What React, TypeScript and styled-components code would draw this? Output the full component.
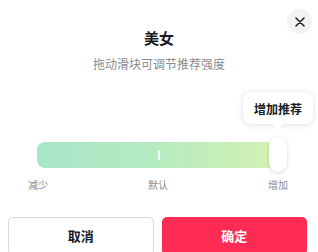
import React from "react";
import styled, { createGlobalStyle } from "styled-components";

const GlobalStyle = createGlobalStyle`
  html, body {
    margin: 0;
    padding: 0;
    background: #ffffff;
  }
  * {
    box-sizing: border-box;
  }
`;

const Sheet = styled.div`
  position: relative;
  width: 318px;
  height: 252px;
  overflow: hidden;
  background: #ffffff;
  font-family: "Noto Sans CJK SC", "Noto Sans", sans-serif;
  padding-top: 28px;
`;

const CloseButton = styled.button`
  position: absolute;
  top: 9px;
  right: 6px;
  width: 25px;
  height: 25px;
  border: none;
  border-radius: 50%;
  background: #f2f2f2;
  display: flex;
  align-items: center;
  justify-content: center;
  padding: 0;
  cursor: pointer;
`;

const Title = styled.div`
  text-align: center;
  font-size: 15px;
  line-height: 20px;
  font-weight: 700;
  color: #161823;
`;

const Subtitle = styled.div`
  margin-top: 8px;
  text-align: center;
  font-size: 12px;
  line-height: 16px;
  color: #8a8b91;
`;

const Track = styled.div`
  position: relative;
  margin: 70px 37px 0;
  height: 26px;
  border-radius: 8px;
  background: linear-gradient(90deg, #a8e6c9 0%, #b6ebc0 50%, #d6f2b0 100%);
`;

const DefaultMark = styled.div`
  position: absolute;
  left: 50%;
  top: 8px;
  width: 2px;
  height: 10px;
  margin-left: -1px;
  border-radius: 1px;
  background: rgba(255, 255, 255, 0.95);
`;

const Thumb = styled.div<{ $left: number }>`
  position: absolute;
  left: ${({ $left }) => $left}px;
  top: -5px;
  width: 18px;
  height: 35px;
  border-radius: 9px;
  background: #ffffff;
  box-shadow: 0 1px 4px rgba(0, 0, 0, 0.16);
`;

const Tooltip = styled.div<{ $left: number }>`
  position: absolute;
  left: ${({ $left }) => $left}px;
  top: -50px;
  width: 70px;
  height: 32px;
  border-radius: 8px;
  background: #ffffff;
  box-shadow: 0 1px 6px rgba(0, 0, 0, 0.13);
  display: flex;
  align-items: center;
  justify-content: center;
  font-size: 12px;
  font-weight: 700;
  color: #161823;

  &::after {
    content: "";
    position: absolute;
    left: 50%;
    bottom: -5px;
    margin-left: -5px;
    border-left: 5px solid transparent;
    border-right: 5px solid transparent;
    border-top: 5px solid #ffffff;
  }
`;

const Labels = styled.div`
  margin: 10px 30px 0 28px;
  display: flex;
  justify-content: space-between;
  font-size: 10px;
  line-height: 14px;
  color: #8a8b91;
`;

const Actions = styled.div`
  margin-top: 25px;
  padding: 0 11px 0 8px;
  display: grid;
  grid-template-columns: 1fr 1fr;
  gap: 8px;
`;

const ActionButton = styled.button<{ $primary?: boolean }>`
  height: 38px;
  border-radius: 5px;
  font-family: inherit;
  font-size: 13px;
  font-weight: 700;
  padding: 0 0 2px;
  border: ${({ $primary }) => ($primary ? "none" : "1px solid #d9d9db")};
  background: ${({ $primary }) => ($primary ? "#fe2c55" : "#ffffff")};
  color: ${({ $primary }) => ($primary ? "#ffffff" : "#161823")};
  cursor: pointer;
`;

const App = () => {
  return (
    <>
      <GlobalStyle />
      <Sheet>
        <CloseButton aria-label="关闭">
          <svg width="10" height="10" viewBox="0 0 10 10">
            <path
              d="M1 1 L9 9 M9 1 L1 9"
              stroke="#222"
              strokeWidth="1.6"
              strokeLinecap="round"
            />
          </svg>
        </CloseButton>
        <Title>美女</Title>
        <Subtitle>拖动滑块可调节推荐强度</Subtitle>
        <Track>
          <DefaultMark />
          <Thumb $left={232} />
          <Tooltip $left={206}>增加推荐</Tooltip>
        </Track>
        <Labels>
          <span>减少</span>
          <span>默认</span>
          <span>增加</span>
        </Labels>
        <Actions>
          <ActionButton>取消</ActionButton>
          <ActionButton $primary>确定</ActionButton>
        </Actions>
      </Sheet>
    </>
  );
};

export default App;
